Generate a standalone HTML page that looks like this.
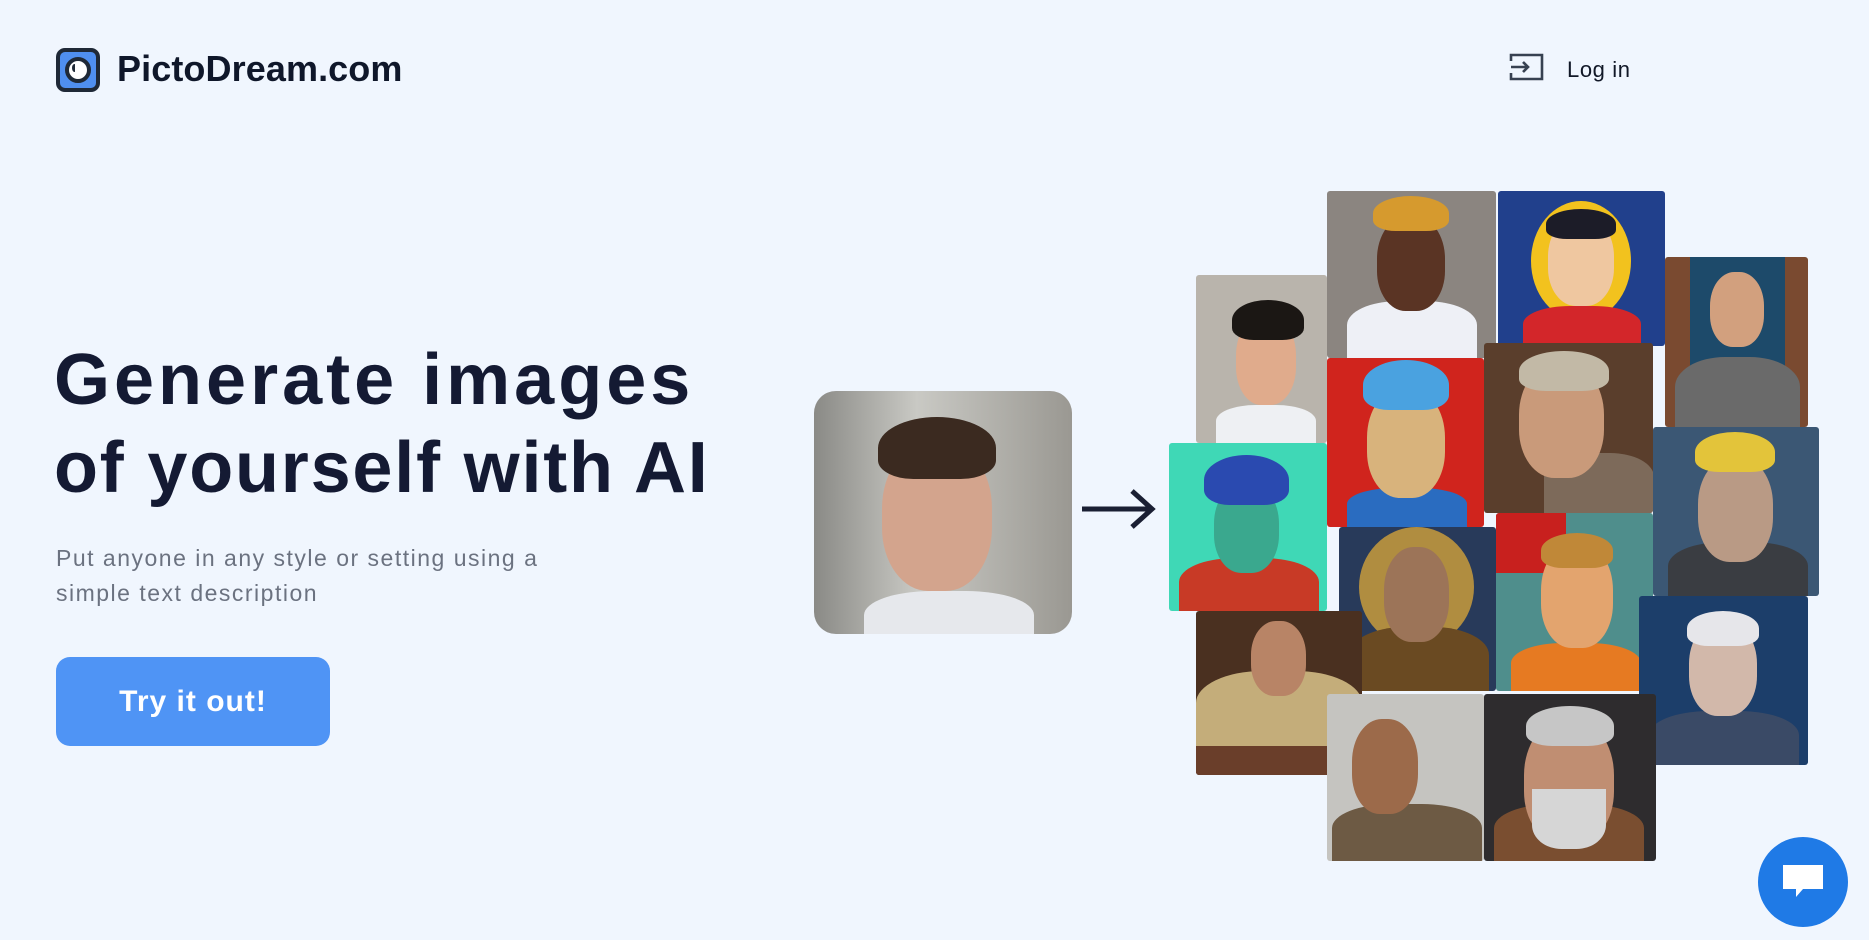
<!DOCTYPE html>
<html><head><meta charset="utf-8"><style>
*{margin:0;padding:0;box-sizing:border-box}
body{width:1869px;height:940px;background:#f0f6fe;font-family:"Liberation Sans",sans-serif;position:relative;overflow:hidden}
.a{position:absolute}
.t{position:absolute;overflow:hidden;border-radius:3px}
.f{position:absolute;border-radius:45% 45% 42% 42%}
.h{position:absolute;border-radius:50% 50% 30% 30%}
.b{position:absolute;border-radius:40% 40% 0 0}
</style></head><body>
<div class="a" style="left:56px;top:48px;width:44px;height:44px;border:4px solid #1f2937;border-radius:9px;background:#4f8ff0"></div>
<div class="a" style="left:65px;top:57px;width:26px;height:26px;border:4px solid #1f2937;border-radius:50%;background:#fff"></div>
<div class="a" style="left:72px;top:64px;width:5px;height:8px;border-left:3px solid #1f2937;border-radius:50%"></div>
<div class="a" style="left:117px;top:48px;font-size:36px;font-weight:bold;color:#0f172a;letter-spacing:0.1px">PictoDream.com</div>
<svg class="a" style="left:1508px;top:52px" width="38" height="30" viewBox="0 0 38 30"><path d="M3 9V3h31v24H3v-6" fill="none" stroke="#374151" stroke-width="2.6"/><path d="M3 15h17M15 10l5 5-5 5" fill="none" stroke="#374151" stroke-width="2.6"/></svg>
<div class="a" style="left:1567px;top:57px;font-size:22px;color:#111827;letter-spacing:0.6px">Log in</div>
<div class="a" style="left:54px;top:336px;font-size:72px;font-weight:bold;color:#141a33;line-height:88px;letter-spacing:4px">Generate images</div>
<div class="a" style="left:54px;top:424px;font-size:72px;font-weight:bold;color:#141a33;line-height:88px;letter-spacing:1.8px">of yourself with AI</div>
<div class="a" style="left:56px;top:541px;font-size:23px;color:#6b7280;line-height:35px;letter-spacing:1.5px">Put anyone in any style or setting using a<br>simple text description</div>
<div class="a" style="left:56px;top:657px;width:274px;height:89px;background:#4f94f5;border-radius:14px;color:#fff;font-size:30px;font-weight:bold;text-align:center;line-height:89px;letter-spacing:1px">Try it out!</div>
<div class="t" style="left:814px;top:391px;width:258px;height:243px;border-radius:22px;background:linear-gradient(90deg,#8a8a86,#c9c9c4 40%,#9a9892)">
<div class="b" style="left:50px;top:200px;width:170px;height:60px;background:#e6e8ec"></div>
<div class="f" style="left:68px;top:50px;width:110px;height:150px;background:#d3a48d"></div>
<div class="h" style="left:64px;top:26px;width:118px;height:62px;background:#3b2a20"></div></div>
<svg class="a" style="left:1080px;top:488px" width="78" height="42" viewBox="0 0 78 42"><path d="M2 21h70M52 3l20 18-20 18" fill="none" stroke="#1a1f33" stroke-width="5"/></svg>

<div class="t" style="left:1196px;top:275px;width:131px;height:168px;background:#b9b4ac"><div class="b" style="left:20px;top:130px;width:100px;height:40px;background:#eef0f3"></div><div class="f" style="left:40px;top:40px;width:60px;height:90px;background:#e0ab8c"></div><div class="h" style="left:36px;top:25px;width:72px;height:40px;background:#1b1714"></div></div>
<div class="t" style="left:1327px;top:191px;width:169px;height:167px;background:#8b8580"><div class="b" style="left:20px;top:110px;width:130px;height:60px;background:#eef0f6"></div><div class="f" style="left:50px;top:25px;width:68px;height:95px;background:#5a3424"></div><div class="h" style="left:46px;top:5px;width:76px;height:35px;background:#d69a2e"></div></div>
<div class="t" style="left:1498px;top:191px;width:167px;height:155px;background:#21408c"><div class="a" style="left:33px;top:10px;width:100px;height:120px;border-radius:50%;background:#f2c21e"></div><div class="b" style="left:25px;top:115px;width:118px;height:45px;background:#d3262a"></div><div class="f" style="left:50px;top:25px;width:66px;height:90px;background:#efc7a0"></div><div class="h" style="left:48px;top:18px;width:70px;height:30px;background:#1c1c28"></div></div>
<div class="t" style="left:1665px;top:257px;width:143px;height:170px;background:#7a4a30"><div class="a" style="left:25px;top:0;width:95px;height:170px;background:#1d4a6a"></div><div class="b" style="left:10px;top:100px;width:125px;height:75px;background:#6a6a6a"></div><div class="f" style="left:45px;top:15px;width:54px;height:75px;background:#d2a07e"></div></div>
<div class="t" style="left:1327px;top:358px;width:157px;height:169px;background:#d0241d"><div class="b" style="left:20px;top:130px;width:120px;height:40px;background:#2a6cc0"></div><div class="f" style="left:40px;top:30px;width:78px;height:110px;background:#d8b37c"></div><div class="h" style="left:36px;top:2px;width:86px;height:50px;background:#4aa2e0"></div></div>
<div class="t" style="left:1484px;top:343px;width:169px;height:170px;background:#5a3e2c"><div class="b" style="left:60px;top:110px;width:110px;height:60px;background:#7d6a5a"></div><div class="f" style="left:35px;top:20px;width:85px;height:115px;background:#c99a7a"></div><div class="h" style="left:35px;top:8px;width:90px;height:40px;background:#c2b9a6"></div></div>
<div class="t" style="left:1653px;top:427px;width:166px;height:169px;background:#3b5774"><div class="b" style="left:15px;top:115px;width:140px;height:60px;background:#3a3d42"></div><div class="f" style="left:45px;top:30px;width:75px;height:105px;background:#b99a85"></div><div class="h" style="left:42px;top:5px;width:80px;height:40px;background:#e3c43a"></div></div>
<div class="t" style="left:1169px;top:443px;width:158px;height:168px;background:#3fd8b6"><div class="b" style="left:10px;top:115px;width:140px;height:60px;background:#c83a26"></div><div class="f" style="left:45px;top:40px;width:65px;height:90px;background:#3aa88e"></div><div class="h" style="left:35px;top:12px;width:85px;height:50px;background:#2a4ab0"></div></div>
<div class="t" style="left:1339px;top:527px;width:157px;height:164px;background:#283a5a"><div class="a" style="left:20px;top:0;width:115px;height:120px;border-radius:50%;background:#b08d40"></div><div class="b" style="left:10px;top:100px;width:140px;height:70px;background:#6a4a22"></div><div class="f" style="left:45px;top:20px;width:65px;height:95px;background:#9c7458"></div></div>
<div class="t" style="left:1496px;top:513px;width:157px;height:178px;background:#4f8e8c"><div class="a" style="left:0;top:0;width:70px;height:60px;background:#c8201e"></div><div class="b" style="left:15px;top:130px;width:130px;height:50px;background:#e67a22"></div><div class="f" style="left:45px;top:30px;width:72px;height:105px;background:#e3a46e"></div><div class="h" style="left:45px;top:20px;width:72px;height:35px;background:#c08838"></div></div>
<div class="t" style="left:1639px;top:596px;width:169px;height:169px;background:#1c3e6a"><div class="b" style="left:10px;top:115px;width:150px;height:60px;background:#3a4a66"></div><div class="f" style="left:50px;top:25px;width:68px;height:95px;background:#d2b8aa"></div><div class="h" style="left:48px;top:15px;width:72px;height:35px;background:#e6e6ea"></div></div>
<div class="t" style="left:1196px;top:611px;width:166px;height:164px;background:#4a3020"><div class="b" style="left:0;top:60px;width:166px;height:80px;background:#c4ad7a"></div><div class="a" style="left:0;top:135px;width:166px;height:30px;background:#6a3e2a"></div><div class="f" style="left:55px;top:10px;width:55px;height:75px;background:#b88466"></div></div>
<div class="t" style="left:1327px;top:694px;width:157px;height:167px;background:#c5c4c0"><div class="b" style="left:5px;top:110px;width:150px;height:60px;background:#6d5a44"></div><div class="f" style="left:25px;top:25px;width:66px;height:95px;background:#9c6a4a"></div></div>
<div class="t" style="left:1484px;top:694px;width:172px;height:167px;background:#2e2c2e"><div class="b" style="left:10px;top:110px;width:150px;height:60px;background:#7a4e30"></div><div class="f" style="left:40px;top:25px;width:90px;height:125px;background:#c08e72"></div><div class="a" style="left:48px;top:95px;width:74px;height:60px;border-radius:0 0 40% 40%;background:#d6d6d6"></div><div class="h" style="left:42px;top:12px;width:88px;height:40px;background:#c6c6c6"></div></div>

<div class="a" style="left:1758px;top:837px;width:90px;height:90px;border-radius:50%;background:#1f7ae6"></div>
<svg class="a" style="left:1781px;top:863px" width="44" height="40" viewBox="0 0 44 40"><path d="M2 2h40v24H22l-7 8v-8H2z" fill="#fff"/></svg>
</body></html>
